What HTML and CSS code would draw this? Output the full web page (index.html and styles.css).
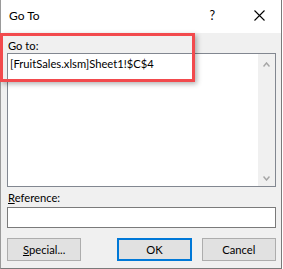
FILE: index.html
```html
<!DOCTYPE html>
<html>
<head>
<meta charset="utf-8">
<link rel="stylesheet" href="styles.css">
</head>
<body>
<div class="window">
  <div class="titlebar">
    <span class="title">Go To</span>
    <span class="help">?</span>
    <svg class="close" width="11" height="11" viewBox="0 0 11 11"><path d="M0.5 0.5 L10.5 10.5 M10.5 0.5 L0.5 10.5" stroke="#000" stroke-width="1.1" fill="none"/></svg>
  </div>
  <div class="content">
    <div class="label goto-label">Go to:</div>
    <div class="listbox">
      <div class="items">
        <div class="item">[FruitSales.xlsm]Sheet1!$C$4</div>
      </div>
      <div class="scrollbar">
        <svg class="arrow" width="7" height="5" viewBox="0 0 7 5"><path d="M0.5 4.5 L3.5 1 L6.5 4.5" stroke="#a6a6a6" stroke-width="1.5" fill="none"/></svg>
        <svg class="arrow" width="7" height="5" viewBox="0 0 7 5"><path d="M0.5 0.5 L3.5 4 L6.5 0.5" stroke="#a6a6a6" stroke-width="1.5" fill="none"/></svg>
      </div>
    </div>
    <div class="label ref-label"><u>R</u>eference:</div>
    <div class="textbox"></div>
    <div class="buttons">
      <div class="btn"><u>S</u>pecial...</div>
      <div class="btn default">OK</div>
      <div class="btn">Cancel</div>
    </div>
  </div>
  <div class="highlight"></div>
</div>
</body>
</html>
```
FILE: styles.css
```css
html, body {
  margin: 0;
  padding: 0;
}
body {
  width: 283px;
  height: 269px;
  overflow: hidden;
  background: #ffffff;
  font-family: "Lato", "Liberation Sans", sans-serif;
  font-size: 11.2px;
  color: #000;
}
.window {
  position: relative;
  width: 282px;
  height: 269px;
  box-sizing: border-box;
  border-left: 1px solid #9a9a9a;
  border-right: 1px solid #7a7a7a;
  border-bottom: 1px solid #7a7a7a;
  display: flex;
  flex-direction: column;
}
.titlebar {
  height: 33px;
  flex: none;
  background: #fff;
  display: flex;
  align-items: center;
  padding-left: 8px;
  box-sizing: border-box;
}
.title {
  flex: 1;
  font-size: 12px;
  line-height: 16px;
  margin-top: -1px;
}
.help {
  font-size: 12.5px;
  line-height: 16px;
  margin-right: 39px;
  margin-top: -1px;
}
.close {
  margin-right: 16px;
  margin-top: -2px;
}
.content {
  flex: 1;
  background: #f0f0f0;
  padding: 5px 5px 0 6px;
  display: flex;
  flex-direction: column;
}
.label {
  line-height: 15px;
  height: 15px;
  padding-left: 1px;
}
.listbox {
  height: 134px;
  flex: none;
  box-sizing: border-box;
  border: 1px solid #828790;
  background: #fff;
  display: flex;
}
.items {
  flex: 1;
  padding: 2px 0 0 2px;
}
.item {
  line-height: 15px;
}
.scrollbar {
  width: 17px;
  background: #f0f0f0;
  display: flex;
  flex-direction: column;
  justify-content: space-between;
  align-items: center;
  padding: 8px 0 5px;
  box-sizing: border-box;
}
.ref-label {
  margin-top: 3px;
}
.textbox {
  margin-top: 2px;
  height: 21px;
  flex: none;
  box-sizing: border-box;
  border: 1px solid #7a7a7a;
  background: #fff;
}
.buttons {
  margin-top: 10px;
  display: flex;
  gap: 10px;
}
.btn {
  width: 75px;
  height: 23px;
  box-sizing: border-box;
  border: 1px solid #adadad;
  background: #e1e1e1;
  display: flex;
  align-items: center;
  justify-content: center;
  line-height: 15px;
}
.btn:first-child {
  margin-right: 26px;
}
.btn.default {
  border: 2px solid #0078d7;
}
.highlight {
  position: absolute;
  left: -1px;
  top: 33px;
  width: 195px;
  height: 49px;
  box-sizing: border-box;
  border: 3px solid #f24a4d;
  box-shadow: 2px 2px 5px rgba(0,0,0,0.3);
}
```
